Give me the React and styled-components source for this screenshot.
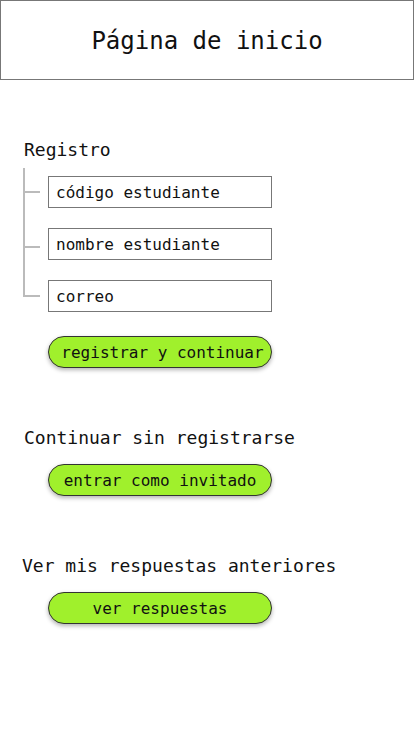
import React from "react";
import styled, { createGlobalStyle } from "styled-components";

const Global = createGlobalStyle`
  html, body { margin: 0; padding: 0; background: #fff; }
  body { font-family: "DejaVu Sans Mono", "Liberation Mono", monospace; color: #111; }
  * { box-sizing: border-box; }
`;

const Page = styled.div`
  width: 414px;
  min-height: 736px;
  display: flex;
  flex-direction: column;
`;

const Header = styled.header`
  height: 80px;
  border: 1px solid #777;
  display: flex;
  align-items: center;
  justify-content: center;
  padding-top: 2px;
  font-size: 24px;
  color: #111;
`;

const Section = styled.section`
  display: flex;
  flex-direction: column;
  padding-left: ${(p) => p.$indent ?? 24}px;
  margin-top: ${(p) => p.$top}px;
`;

const Label = styled.div`
  font-size: 18px;
  line-height: 21px;
  color: #111;
`;

const Tree = styled.div`
  position: relative;
  display: flex;
  flex-direction: column;
  gap: 20px;
  margin-top: 16px;
  &::before {
    content: "";
    position: absolute;
    left: -1px;
    top: -8px;
    bottom: 15px;
    width: 2px;
    background: #bbb;
  }
`;

const Row = styled.div`
  display: flex;
  align-items: center;
`;

const Branch = styled.span`
  width: 16px;
  height: 2px;
  background: #bbb;
  margin-right: 8px;
  margin-top: ${(p) => p.$dy ?? 0}px;
`;

const Field = styled.div`
  width: 224px;
  height: 32px;
  border: 1px solid #777;
  background: #fff;
  display: flex;
  align-items: center;
  padding-left: 7px;
  font-size: 16px;
  color: #111;
`;

const Button = styled.button`
  width: 224px;
  height: 32px;
  margin-left: ${(p) => p.$ml ?? 24}px;
  margin-top: ${(p) => p.$mt}px;
  border: 1px solid #333;
  border-radius: 16px;
  background: #a0f02c;
  box-shadow: 0 2px 4px rgba(0, 0, 0, 0.3);
  font-family: "DejaVu Sans Mono", monospace;
  font-size: 16px;
  color: #111;
  padding: 0 0 0 ${(p) => p.$pl ?? 0}px;
  display: flex;
  align-items: center;
  justify-content: center;
  white-space: nowrap;
  overflow: visible;
`;

export default function App() {
  return (
    <Page>
      <Global />
      <Header>Página de inicio</Header>
      <Section $top={59}>
        <Label>Registro</Label>
        <Tree>
          <Row>
            <Branch />
            <Field>código estudiante</Field>
          </Row>
          <Row>
            <Branch $dy={6} />
            <Field>nombre estudiante</Field>
          </Row>
          <Row>
            <Branch />
            <Field>correo</Field>
          </Row>
        </Tree>
        <Button $mt={24} $pl={5}>registrar y continuar</Button>
      </Section>
      <Section $top={59}>
        <Label>Continuar sin registrarse</Label>
        <Button $mt={16}>entrar como invitado</Button>
      </Section>
      <Section $top={59} $indent={22}>
        <Label>Ver mis respuestas anteriores</Label>
        <Button $mt={16} $ml={26}>ver respuestas</Button>
      </Section>
    </Page>
  );
}
